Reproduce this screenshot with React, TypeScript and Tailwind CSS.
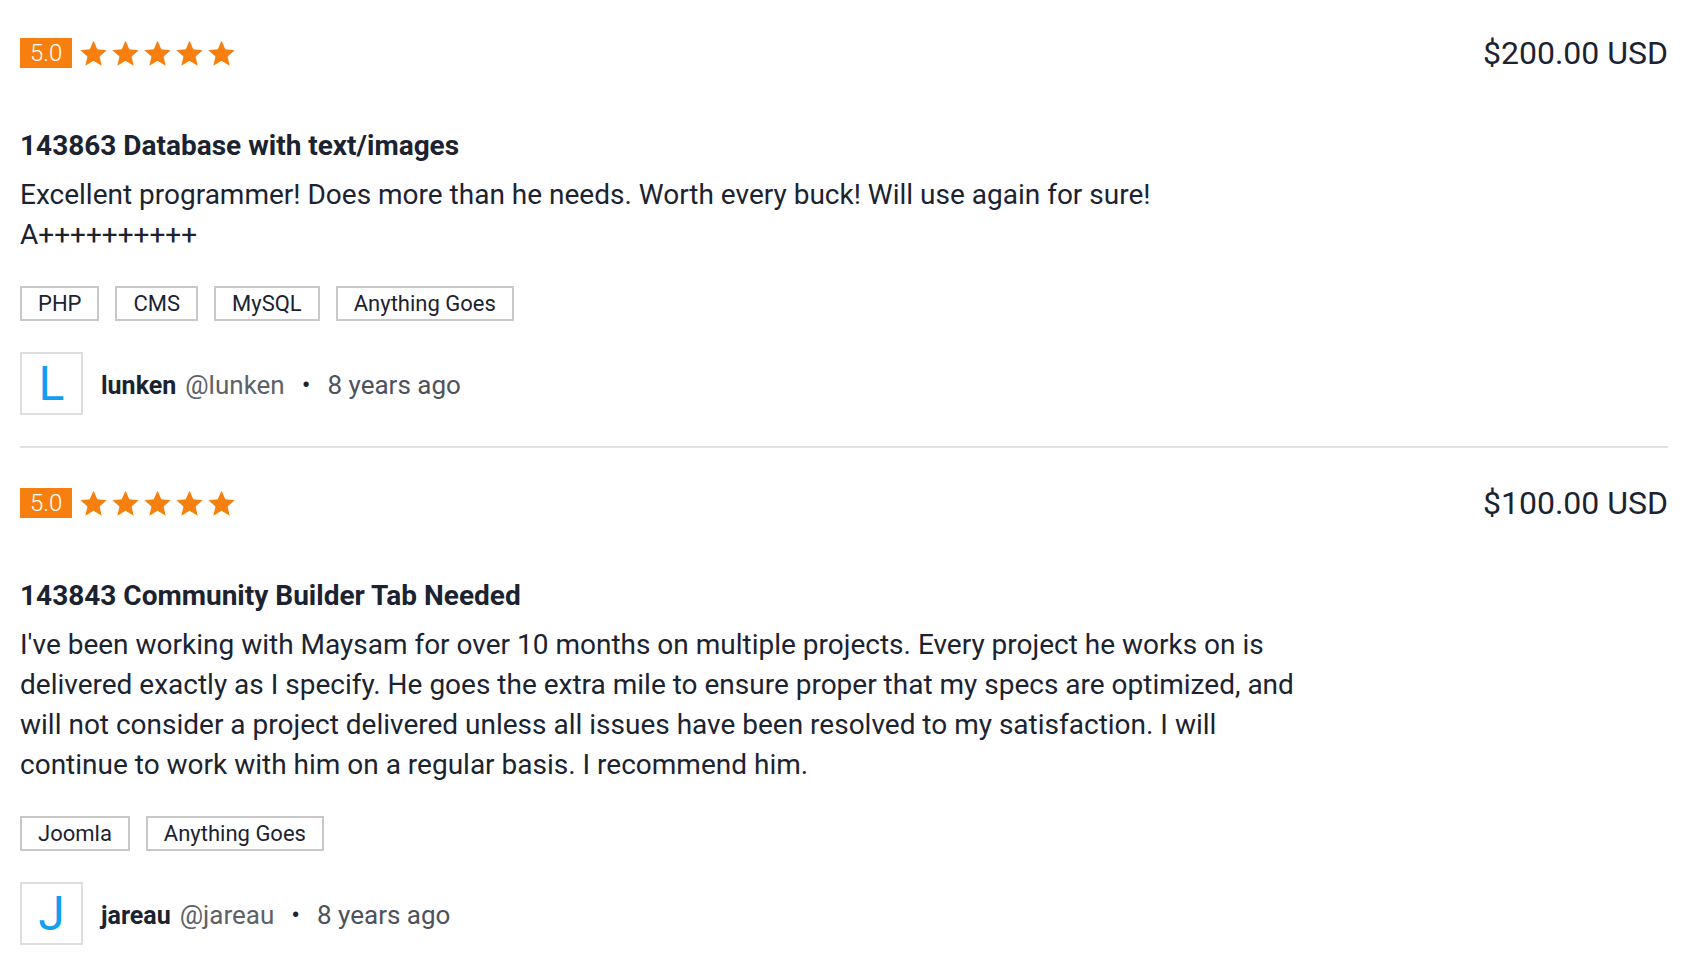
import React from 'react';

type Review = {
  id: number;
  rating: string;
  price: string;
  title: string;
  text: string[];
  tags: string[];
  name: string;
  handle: string;
  when: string;
};

const reviews: Review[] = [
  {
    id: 1,
    rating: '5.0',
    price: '$200.00 USD',
    title: '143863 Database with text/images',
    text: ['Excellent programmer! Does more than he needs. Worth every buck! Will use again for sure!', 'A++++++++++'],
    tags: ['PHP', 'CMS', 'MySQL', 'Anything Goes'],
    name: 'lunken',
    handle: '@lunken',
    when: '8 years ago',
  },
  {
    id: 2,
    rating: '5.0',
    price: '$100.00 USD',
    title: '143843 Community Builder Tab Needed',
    text: [
      "I've been working with Maysam for over 10 months on multiple projects. Every project he works on is delivered exactly as I specify. He goes the extra mile to ensure proper that my specs are optimized, and will not consider a project delivered unless all issues have been resolved to my satisfaction. I will continue to work with him on a regular basis. I recommend him.",
    ],
    tags: ['Joomla', 'Anything Goes'],
    name: 'jareau',
    handle: '@jareau',
    when: '8 years ago',
  },
];

const Star = () => (
  <svg viewBox="0 0 24 24" className="w-[29px] h-[29px]" fill="#f77f0f">
    <path d="M12 1.4l3.15 7.15 7.75.7-5.85 5.15 1.75 7.7L12 18.1l-6.75 4 1.75-7.7L1.15 9.25l7.75-.7z" />
  </svg>
);

const ReviewItem = ({ review, last }: { review: Review; last: boolean }) => (
  <div className={last ? '' : 'border-b-2 border-[#e1e1e1] pb-[31px] mb-[40px]'}>
    <div className="flex items-center justify-between h-[30px]">
      <div className="flex items-center">
        <span className="bg-[#f77f0f] text-white text-[24px] font-light leading-[30px] h-[30px] px-[10px]">
          {review.rating}
        </span>
        <div className="flex items-center gap-[3px] ml-[7px]">
          {[0, 1, 2, 3, 4].map((i) => (
            <Star key={i} />
          ))}
        </div>
      </div>
      <span className="text-[32px] leading-[30px] text-[#1b2331]">{review.price}</span>
    </div>

    <h3 className="mt-[60px] text-[28px] leading-[36px] font-bold text-[#1b2331]">{review.title}</h3>

    <div className="mt-[11px] max-w-[1300px] text-[28px] leading-[40px] text-[#1b2331]">
      {review.text.map((t, i) => (
        <p key={i}>{t}</p>
      ))}
    </div>

    <div className="mt-[31px] flex gap-[16px]">
      {review.tags.map((tag) => (
        <span
          key={tag}
          className="h-[35px] px-[16px] border-2 border-[#c8c8c8] text-[22px] leading-[31px] text-[#1b2331]"
        >
          {tag}
        </span>
      ))}
    </div>

    <div className="mt-[31px] flex items-center">
      <div className="w-[63px] h-[63px] border-2 border-[#dedede] flex items-center justify-center text-[48px] text-[#139ff0]">
        {review.name.charAt(0).toUpperCase()}
      </div>
      <div className="ml-[18px] pt-[4px] flex items-center text-[26px]">
        <span className="text-[25px] font-bold text-[#1b2331]">{review.name}</span>
        <span className="ml-[9px] text-[#5d6168]">{review.handle}</span>
        <span className="mx-[17px] text-[#1b2331]">•</span>
        <span className="text-[#4d525b]">{review.when}</span>
      </div>
    </div>
  </div>
);

export default function App() {
  return (
    <div className="bg-white min-h-screen pl-[20px] pr-[28px] pt-[38px] font-['Roboto',sans-serif]">
      {reviews.map((r, i) => (
        <ReviewItem key={r.id} review={r} last={i === reviews.length - 1} />
      ))}
    </div>
  );
}
